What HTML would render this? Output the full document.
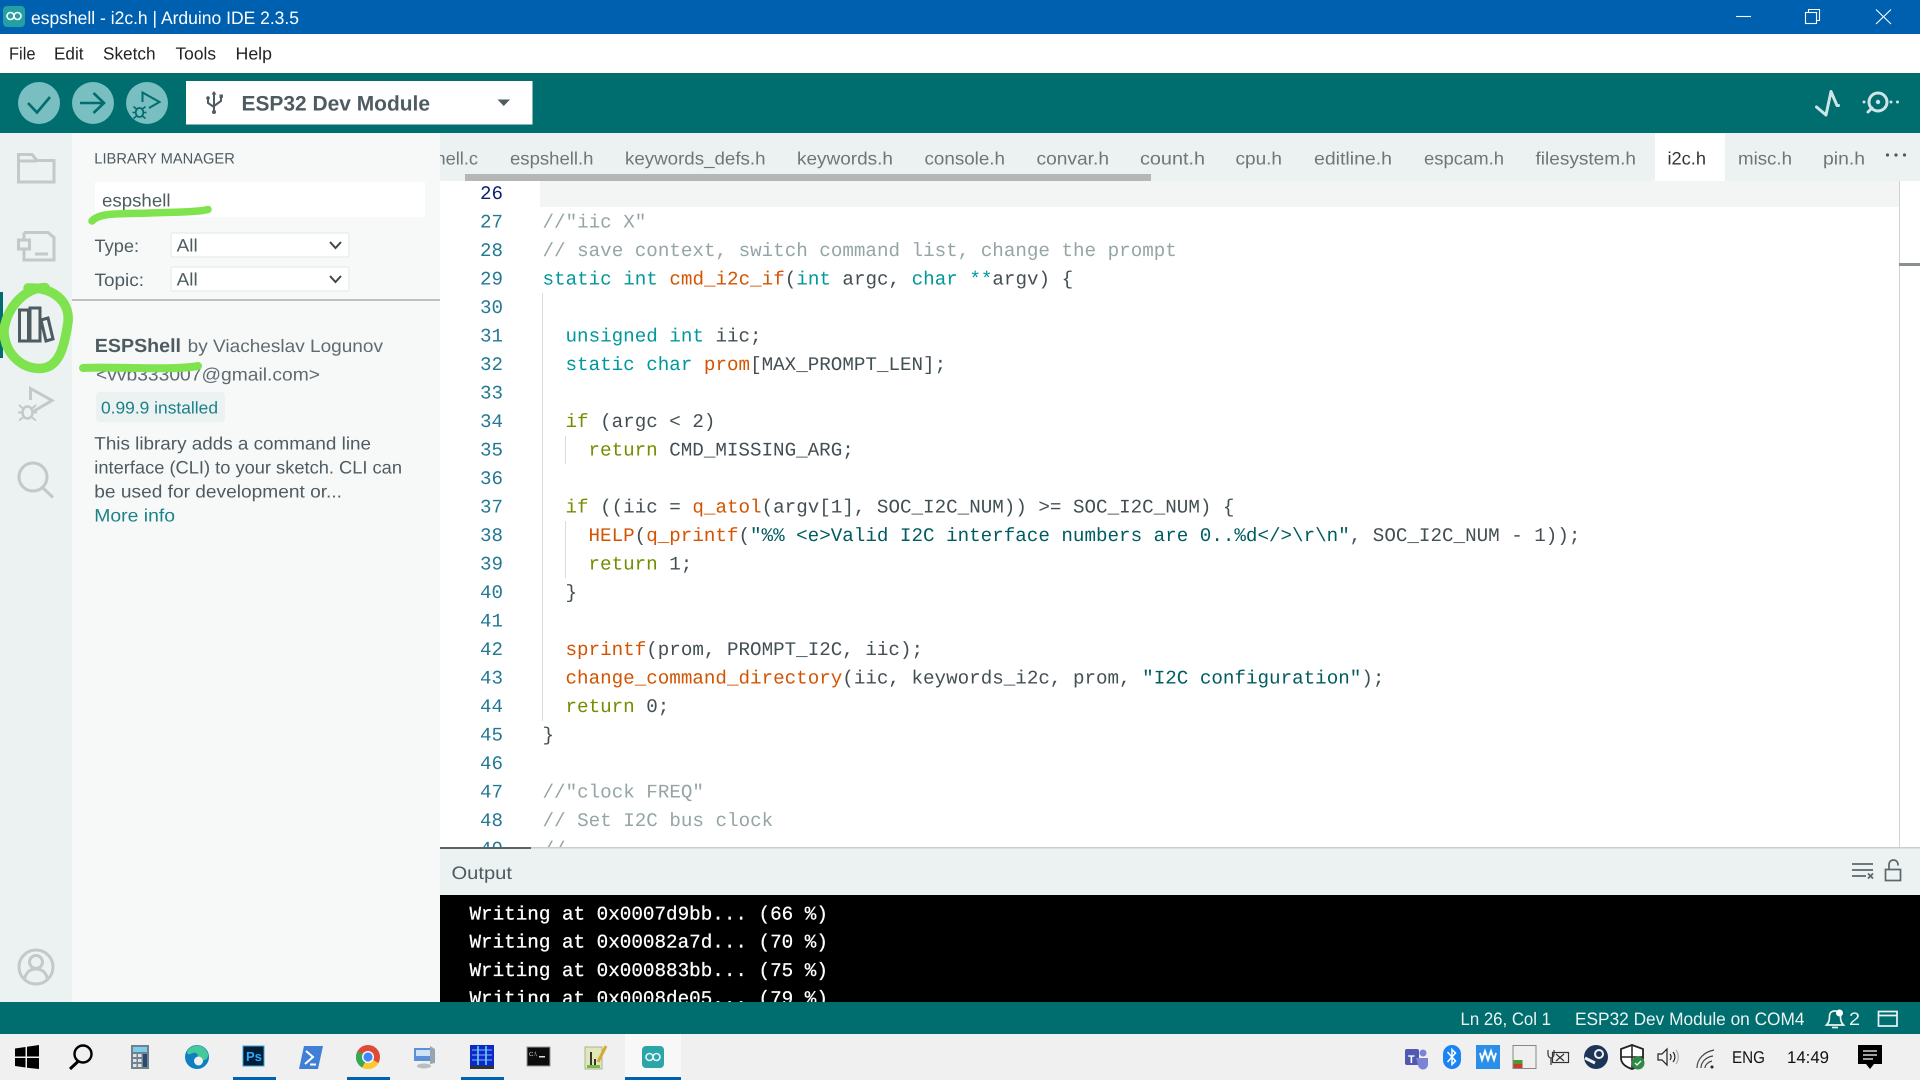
<!DOCTYPE html>
<html lang="en">
<head>
<meta charset="utf-8">
<title>espshell - i2c.h | Arduino IDE 2.3.5</title>
<style>
html,body{margin:0;padding:0;width:1920px;height:1080px;overflow:hidden;background:#fff}
svg{display:block;position:absolute;left:0;top:0}
text{font-family:"Liberation Sans",sans-serif;white-space:pre;text-rendering:geometricPrecision}
.code text{font-family:"Liberation Mono",monospace;font-size:19.23px;fill:#434f54}
text.mono{font-family:"Liberation Mono",monospace;font-size:19.27px;fill:#fff;stroke:#fff;stroke-width:.25px}
.n text{font-family:"Liberation Mono",monospace;font-size:19.17px;fill:#237893;text-anchor:end}
.k{fill:#00979d}.f{fill:#d35400}.c{fill:#728e00}.s{fill:#005c5f}
.m text{fill:#95a5a6}
.tab text{font-size:18px;fill:#6f7679}
.ui{fill:#4e5b61;font-size:18px}
.i{fill:none;stroke:#c3c8c9;stroke-width:3}
.g{fill:none;stroke:#7fe34f;stroke-linecap:round;stroke-linejoin:round}
</style>
</head>
<body>
<svg width="1920" height="1080" viewBox="0 0 1920 1080" xmlns="http://www.w3.org/2000/svg">
<!-- tabs strip -->
<rect x="440" y="133" width="1480" height="48" fill="#ecf1f1"/>
<rect x="1655" y="133" width="70" height="48" fill="#fff"/>
<g class="tab" transform="translate(0,-.5)">
<text x="397" y="165" textLength="81" lengthAdjust="spacingAndGlyphs">espshell.c</text>
<text x="510" y="165" textLength="83.5" lengthAdjust="spacingAndGlyphs">espshell.h</text>
<text x="625" y="165" textLength="140.5" lengthAdjust="spacingAndGlyphs">keywords_defs.h</text>
<text x="797" y="165" textLength="96" lengthAdjust="spacingAndGlyphs">keywords.h</text>
<text x="924.5" y="165" textLength="80.5" lengthAdjust="spacingAndGlyphs">console.h</text>
<text x="1036.5" y="165" textLength="72.5" lengthAdjust="spacingAndGlyphs">convar.h</text>
<text x="1140" y="165" textLength="65" lengthAdjust="spacingAndGlyphs">count.h</text>
<text x="1235.5" y="165" textLength="46.5" lengthAdjust="spacingAndGlyphs">cpu.h</text>
<text x="1314" y="165" textLength="78" lengthAdjust="spacingAndGlyphs">editline.h</text>
<text x="1424" y="165" textLength="80" lengthAdjust="spacingAndGlyphs">espcam.h</text>
<text x="1535.5" y="165" textLength="100.5" lengthAdjust="spacingAndGlyphs">filesystem.h</text>
<text x="1667.5" y="165" textLength="38.5" lengthAdjust="spacingAndGlyphs" style="fill:#333">i2c.h</text>
<text x="1738" y="165" textLength="54" lengthAdjust="spacingAndGlyphs">misc.h</text>
<text x="1823" y="165" textLength="42" lengthAdjust="spacingAndGlyphs">pin.h</text>
</g>
<g fill="#555"><circle cx="1887.5" cy="155" r="1.6"/><circle cx="1896" cy="155" r="1.6"/><circle cx="1904.5" cy="155" r="1.6"/></g>
<rect x="465" y="174" width="686" height="7" fill="#b5b7b7"/>

<!-- editor -->
<rect x="440" y="181" width="1480" height="666" fill="#fff"/>
<rect x="540" y="181" width="1359" height="26" fill="#f3f5f5"/>
<rect x="1899" y="181" width="1" height="666" fill="#d0d3d4"/>
<rect x="1899" y="263" width="21" height="3" fill="#8a8f91"/>
<rect x="542" y="293" width="1" height="428" fill="#d9dcdd"/>
<rect x="565" y="436" width="1" height="28" fill="#d9dcdd"/>
<rect x="565" y="521" width="1" height="57" fill="#d9dcdd"/>
<g class="n" transform="translate(0,-.3)">
<text x="503" y="199.5" style="fill:#0b216f">26</text>
<text x="503" y="228">27</text>
<text x="503" y="256.5">28</text>
<text x="503" y="285">29</text>
<text x="503" y="313.5">30</text>
<text x="503" y="342">31</text>
<text x="503" y="370.5">32</text>
<text x="503" y="399">33</text>
<text x="503" y="427.5">34</text>
<text x="503" y="456">35</text>
<text x="503" y="484.5">36</text>
<text x="503" y="513">37</text>
<text x="503" y="541.5">38</text>
<text x="503" y="570">39</text>
<text x="503" y="598.5">40</text>
<text x="503" y="627">41</text>
<text x="503" y="655.5">42</text>
<text x="503" y="684">43</text>
<text x="503" y="712.5">44</text>
<text x="503" y="741">45</text>
<text x="503" y="769.5">46</text>
<text x="503" y="798">47</text>
<text x="503" y="826.5">48</text>
<text x="503" y="855">49</text>
</g>
<g class="code" transform="translate(0,-.3)">
<g class="m">
<text x="542.5" y="228">//"iic X"</text>
<text x="542.5" y="256.5">// save context, switch command list, change the prompt</text>
<text x="542.5" y="798">//"clock FREQ"</text>
<text x="542.5" y="826.5">// Set I2C bus clock</text>
<text x="542.5" y="855">//</text>
</g>
<text x="542.5" y="285"><tspan class="k">static int</tspan> <tspan class="f">cmd_i2c_if</tspan>(<tspan class="k">int</tspan> argc, <tspan class="k">char</tspan> <tspan class="k">**</tspan>argv) {</text>
<text x="565.5" y="342"><tspan class="k">unsigned int</tspan> iic;</text>
<text x="565.5" y="370.5"><tspan class="k">static char</tspan> <tspan class="f">prom</tspan>[MAX_PROMPT_LEN];</text>
<text x="565.5" y="427.5"><tspan class="c">if</tspan> (argc &lt; 2)</text>
<text x="588.5" y="456"><tspan class="c">return</tspan> CMD_MISSING_ARG;</text>
<text x="565.5" y="513"><tspan class="c">if</tspan> ((iic = <tspan class="f">q_atol</tspan>(argv[1], SOC_I2C_NUM)) &gt;= SOC_I2C_NUM) {</text>
<text x="588.5" y="541.5"><tspan class="f">HELP</tspan>(<tspan class="f">q_printf</tspan>(<tspan class="s">"%% &lt;e&gt;Valid I2C interface numbers are 0..%d&lt;/&gt;\r\n"</tspan>, SOC_I2C_NUM - 1));</text>
<text x="588.5" y="570"><tspan class="c">return</tspan> 1;</text>
<text x="565.5" y="598.5">}</text>
<text x="565.5" y="655.5"><tspan class="f">sprintf</tspan>(prom, PROMPT_I2C, iic);</text>
<text x="565.5" y="684"><tspan class="f">change_command_directory</tspan>(iic, keywords_i2c, prom, <tspan class="s">"I2C configuration"</tspan>);</text>
<text x="565.5" y="712.5"><tspan class="c">return</tspan> 0;</text>
<text x="542.5" y="741">}</text>
</g>

<!-- output -->
<rect x="440" y="847" width="1480" height="48" fill="#ecf1f1"/>
<rect x="440" y="847" width="1480" height="1.5" fill="#c9cdce"/>
<rect x="440" y="847" width="91" height="2" fill="#5a6468"/>
<text class="ui" x="451.5" y="879" textLength="60.5" lengthAdjust="spacingAndGlyphs">Output</text>
<g fill="none" stroke="#5b666b" stroke-width="1.7">
<path d="M1852 864H1873M1852 870H1873M1852 876H1866M1868 873.5l5 5M1873 873.5l-5 5"/>
<rect x="1885.5" y="869.5" width="15" height="11"/>
<path d="M1889 869v-4.5a4.5 4.5 0 0 1 9 0v1"/>
</g>
<rect x="440" y="895" width="1480" height="107" fill="#000"/>
<g>
<text class="mono" x="469.5" y="919.5">Writing at 0x0007d9bb... (66 %)</text>
<text class="mono" x="469.5" y="947.5">Writing at 0x00082a7d... (70 %)</text>
<text class="mono" x="469.5" y="976">Writing at 0x000883bb... (75 %)</text>
<text class="mono" x="469.5" y="1004">Writing at 0x0008de05... (79 %)</text>
</g>

<!-- left activity bar and library panel -->
<rect x="0" y="133" width="72" height="869" fill="#ecf1f1"/>
<rect x="72" y="133" width="368" height="869" fill="#f7f9f9"/>
<!-- activity icons -->
<path class="i" d="M18.5 182V154.5H32l5 6H54V182Z M18.5 161H37"/>
<g class="i"><path d="M24 232.5H48l6 5V260H24V249 M24 241v-8.5"/><rect x="18.5" y="240" width="11" height="9"/><path d="M35 254H48"/></g>
<g class="i"><path d="M30.500 400V388.500L52 400.500L34 411"/><ellipse cx="27.500" cy="412.500" rx="5" ry="6" stroke-width="2.500"/><path d="M19 405l4 3.500M36 405l-4 3.500M18 412.500h4M33 412.500h4M19 420.500l4-3M36 420.500l-4-3" stroke-width="2"/></g>
<g class="i" stroke-width="3.2"><circle cx="33" cy="477" r="14"/><path d="M43 488L53 497.5"/></g>
<g class="i"><circle cx="36" cy="967" r="17"/><circle cx="36" cy="962" r="6.5"/><path d="M24.5 980c1-8 6-11 11.5-11s10.5 3 11.5 11"/></g>
<rect x="0" y="292" width="3" height="66" fill="#006d70"/>
<g fill="none" stroke="#4e5b61" stroke-width="3"><rect x="19.5" y="310" width="9" height="31"/><rect x="30" y="308" width="10" height="33"/><path d="M41 320l7-2 5 21-7 2Z"/></g>

<text class="ui" x="94.300" y="163.500" style="font-size:15px" textLength="140.500" lengthAdjust="spacingAndGlyphs">LIBRARY MANAGER</text>
<rect x="95" y="182" width="330" height="35" fill="#fff"/>
<text class="ui" x="102" y="206.300" textLength="68.500" lengthAdjust="spacingAndGlyphs">espshell</text>
<text class="ui" x="94.500" y="252.200" textLength="44.500" lengthAdjust="spacingAndGlyphs">Type:</text>
<text class="ui" x="94.500" y="286.200" textLength="49.500" lengthAdjust="spacingAndGlyphs">Topic:</text>
<rect x="171" y="233" width="178" height="24" rx="2" fill="#fff" stroke="#e3e6e6"/>
<rect x="171" y="267" width="178" height="24" rx="2" fill="#fff" stroke="#e3e6e6"/>
<text class="ui" x="176.700" y="251.300" textLength="21" lengthAdjust="spacingAndGlyphs">All</text>
<text class="ui" x="176.700" y="285.300" textLength="21" lengthAdjust="spacingAndGlyphs">All</text>
<path d="M330 242l5.500 6 5.500-6M330 276l5.500 6 5.500-6" fill="none" stroke="#3d474b" stroke-width="2"/>
<rect x="72" y="299" width="368" height="2" fill="#bcc0c1"/>
<text class="ui" x="94.800" y="352.200" style="font-weight:bold;font-size:19px" textLength="86.200" lengthAdjust="spacingAndGlyphs">ESPShell</text>
<text class="ui" x="187.700" y="352.200" textLength="195.300" lengthAdjust="spacingAndGlyphs" style="fill:#5f6b70">by Viacheslav Logunov</text>
<text class="ui" x="96" y="380.500" textLength="224" lengthAdjust="spacingAndGlyphs" style="fill:#5f6b70">&lt;vvb333007@gmail.com&gt;</text>
<rect x="96" y="392" width="129" height="30" rx="4" fill="#ecf1f1"/>
<text x="101" y="413.400" style="font-size:17px;fill:#1a8288" textLength="117" lengthAdjust="spacingAndGlyphs">0.99.9 installed</text>
<text class="ui" x="94.300" y="449.400" textLength="276.700" lengthAdjust="spacingAndGlyphs">This library adds a command line</text>
<text class="ui" x="94.300" y="473.400" textLength="307.700" lengthAdjust="spacingAndGlyphs">interface (CLI) to your sketch. CLI can</text>
<text class="ui" x="94.300" y="497.400" textLength="247.700" lengthAdjust="spacingAndGlyphs">be used for development or...</text>
<text x="94.300" y="521.400" style="font-size:18px;fill:#1a8288" textLength="80.700" lengthAdjust="spacingAndGlyphs">More info</text>

<!-- green marker annotations -->
<path class="g" stroke-width="7.500" d="M92 221C100 212 122 214 150 213S198 212 208 209.500"/>
<path class="g" stroke-width="8" d="M83 368C110 366 170 371 198 366"/>
<path class="g" stroke-width="9.500" d="M45 287.500C24 288 7 308 4 330C4 352 20 368.500 40 368.500C58 368 64 350 68 322C70 302 54 287 28 288"/>

<!-- title bar -->
<rect x="0" y="0" width="1920" height="34" fill="#0060b0"/>
<rect x="3" y="6" width="22" height="21" rx="4" fill="#23a0a4"/>
<g fill="none" stroke="#fff" stroke-width="1.600"><circle cx="10.500" cy="16" r="3.500"/><circle cx="17.500" cy="16" r="3.500"/></g>
<text x="31" y="24" style="font-size:18px;fill:#fff" textLength="268" lengthAdjust="spacingAndGlyphs">espshell - i2c.h | Arduino IDE 2.3.5</text>
<g fill="none" stroke="#fff" stroke-width="1.100">
<path d="M1736 16.500H1751"/>
<rect x="1805.500" y="12.500" width="11" height="11"/>
<path d="M1808.500 12.500V9.500H1819.500V20.500H1816.500"/>
<path d="M1876 9.500L1891 24M1891 9.500L1876 24"/>
</g>

<!-- menu bar -->
<rect x="0" y="34" width="1920" height="39" fill="#fff"/>
<g>
<text x="9" y="59.500" style="font-size:17.500px;fill:#222" textLength="26.500" lengthAdjust="spacingAndGlyphs">File</text>
<text x="54" y="59.500" style="font-size:17.500px;fill:#222" textLength="29.500" lengthAdjust="spacingAndGlyphs">Edit</text>
<text x="103" y="59.500" style="font-size:17.500px;fill:#222" textLength="52.500" lengthAdjust="spacingAndGlyphs">Sketch</text>
<text x="175.500" y="59.500" style="font-size:17.500px;fill:#222" textLength="40.500" lengthAdjust="spacingAndGlyphs">Tools</text>
<text x="235.500" y="59.500" style="font-size:17.500px;fill:#222" textLength="36.500" lengthAdjust="spacingAndGlyphs">Help</text>
</g>

<!-- toolbar -->
<rect x="0" y="73" width="1920" height="60" fill="#006d6f"/>
<g fill="#79bec1"><ellipse cx="39" cy="103" rx="21" ry="21"/><ellipse cx="93" cy="103" rx="21" ry="21"/><ellipse cx="147" cy="103" rx="21" ry="21"/></g>
<g fill="none" stroke="#006d6f" stroke-width="2.600">
<path d="M28 103L37 112.500L50 97"/>
<path d="M80 103H103M93.500 93L104 103L93.500 113"/>
<path d="M142.500 102V92.500L159.500 102L149 108" stroke-width="2"/>
<ellipse cx="139.500" cy="112.500" rx="3.800" ry="4.500" stroke-width="1.800"/>
<path d="M133.500 106.500l3 2.500M145.500 106.500l-3 2.500M132.500 112.500h3.500M143 112.500h3.500M133.500 118.500l3-2.500M145.500 118.500l-3-2.500" stroke-width="1.600"/>
</g>
<rect x="186" y="81" width="346.500" height="43.500" fill="#fff"/>
<g fill="none" stroke="#4e5b61" stroke-width="2"><path d="M214 93V112M208 99v4l6 4M221 97v4l-7 5"/></g>
<path d="M214 91l-2.500 3.500h5Z" fill="#4e5b61"/><circle cx="214" cy="112" r="2" fill="#4e5b61"/><circle cx="208" cy="98" r="1.800" fill="#4e5b61"/><rect x="219.500" y="94.500" width="3.400" height="3.400" fill="#4e5b61"/>
<text x="241.500" y="110.500" style="font-size:21px;font-weight:bold;fill:#4e5b61" textLength="188.500" lengthAdjust="spacingAndGlyphs">ESP32 Dev Module</text>
<path d="M497.500 99.500H510L503.750 106Z" fill="#4e5b61"/>
<g fill="none" stroke="#cde5e6" stroke-width="3" stroke-linecap="round" stroke-linejoin="round">
<path d="M1816.500 107L1826 115L1831 91.500L1837 105.500H1838.500"/>
<circle cx="1878" cy="102" r="9"/>
<path d="M1868 112L1872 108"/>
</g>
<g fill="#cde5e6"><circle cx="1878" cy="102" r="2.200"/><circle cx="1864" cy="102" r="1.500"/><circle cx="1891" cy="102" r="1.500"/><circle cx="1897.500" cy="102" r="1.500"/></g>

<!-- status bar -->
<rect x="0" y="1002" width="1920" height="32" fill="#006d6f"/>
<g>
<text x="1460.500" y="1025" style="font-size:18px;fill:#eaf4f4" textLength="90.500" lengthAdjust="spacingAndGlyphs">Ln 26, Col 1</text>
<text x="1575" y="1025" style="font-size:18px;fill:#eaf4f4" textLength="229.500" lengthAdjust="spacingAndGlyphs">ESP32 Dev Module on COM4</text>
<text x="1849" y="1025" style="font-size:18px;fill:#eaf4f4" textLength="11" lengthAdjust="spacingAndGlyphs">2</text>
</g>
<g fill="none" stroke="#eaf4f4" stroke-width="1.700">
<path d="M1826.500 1025c3-3 3-6 3-9c0-3 2-5 5.500-5s5.500 2 5.500 5c0 3 0 6 3 9Z"/>
<path d="M1832 1027.500h6"/>
<rect x="1878.500" y="1011.500" width="18.500" height="14.500"/><path d="M1878.500 1015.500h18.500"/>
</g>
<circle cx="1839.500" cy="1013" r="3.500" fill="#fff"/>

<!-- taskbar -->
<rect x="0" y="1034" width="1920" height="46" fill="#f0f0f0"/>
<rect x="625" y="1034" width="56" height="46" fill="#f8f8f8"/>
<g fill="#0063b1"><rect x="233" y="1077" width="43" height="3"/><rect x="347" y="1077" width="43" height="3"/><rect x="461" y="1077" width="43" height="3"/><rect x="625" y="1077" width="56" height="3"/></g>
<path d="M15 1048.500L25.500 1047V1056.500H15ZM27 1046.700L39 1045V1056.500H27ZM15 1058H25.500V1067.500L15 1066ZM27 1058H39V1069L27 1067.700Z" fill="#000"/>
<g fill="none" stroke="#000" stroke-width="2.400"><circle cx="83" cy="1054" r="8.500"/><path d="M78 1061.500L70 1069" stroke-width="3"/></g>
<rect x="131" y="1045" width="18" height="24" fill="#71818e"/><rect x="133" y="1047" width="14" height="5" fill="#7fcdee"/>
<g fill="#dfe6ea"><rect x="133" y="1054" width="3.500" height="3"/><rect x="138" y="1054" width="3.500" height="3"/><rect x="133" y="1059" width="3.500" height="3"/><rect x="138" y="1059" width="3.500" height="3"/><rect x="133" y="1064" width="3.500" height="3"/><rect x="138" y="1064" width="3.500" height="3"/></g><rect x="143" y="1054" width="4" height="13" fill="#2b4a70"/>
<circle cx="197" cy="1057" r="12" fill="#0f7fc4"/><path d="M187 1052C190 1044 204 1042 208 1054C209 1060 202 1062 197 1060C200 1055 196 1052 193 1053C189 1054 188 1056 187 1052Z" fill="#45c99a"/><circle cx="198.500" cy="1061" r="4.500" fill="#f0f0f0"/>
<rect x="243" y="1046" width="21" height="20" fill="#001e36" stroke="#2fa3d6" stroke-width="1"/>
<text x="246" y="1061" style="font-size:13px;fill:#31a8ff;font-weight:bold">Ps</text>
<path d="M304 1046H323L318 1069H299Z" fill="#3f80d6"/><path d="M306 1051L313 1057L305 1064M310 1064.500H316" fill="none" stroke="#fff" stroke-width="2"/>
<circle cx="368" cy="1057" r="12" fill="#e04b37"/><path d="M368 1057L378.500 1063A12 12 0 0 1 362 1067.500Z" fill="#fcc934"/><path d="M368 1057L362 1067.500A12 12 0 0 1 357.600 1051Z" fill="#34a853"/><circle cx="368" cy="1057" r="6" fill="#fff"/><circle cx="368" cy="1057" r="4.600" fill="#4285f4"/>
<rect x="414" y="1048" width="19" height="13" fill="#5b8fd6"/><rect x="416" y="1050" width="15" height="6" fill="#cfe2f6"/><path d="M430 1046l5 3v14l-5 1Z" fill="#9aa4ad"/><ellipse cx="424" cy="1066" rx="7" ry="2.500" fill="#b8bec4"/>
<rect x="470" y="1045" width="24" height="21" fill="#0a2bc4"/><path d="M478 1046v19M486 1046v19" stroke="#70e0ff" stroke-width="1.500"/><path d="M472 1050h20M472 1055h20M472 1060h20" stroke="#8fb0ff" stroke-width="1"/><rect x="470" y="1066" width="24" height="3" fill="#333"/>
<rect x="527" y="1047" width="23" height="19" fill="#0c0c0c" stroke="#999"/><text x="529" y="1056" style="font-size:6px;fill:#ddd">C:\</text><rect x="539" y="1056" width="6" height="1.500" fill="#ddd"/>
<rect x="585" y="1047" width="17" height="22" fill="#dfe8b8" stroke="#a9b39a"/><path d="M591 1052v13M595 1059v6" stroke="#222" stroke-width="1.800"/><path d="M598 1062L606 1046" stroke="#d8a92f" stroke-width="3"/><rect x="587" y="1065" width="13" height="3" fill="#7db54a"/>
<rect x="642" y="1046" width="22" height="22" rx="4" fill="#2ba5a8"/>
<g fill="none" stroke="#e6f6f6" stroke-width="1.600"><circle cx="649.500" cy="1057" r="3.500"/><circle cx="656.500" cy="1057" r="3.500"/></g>

<!-- tray -->
<rect x="1405" y="1049" width="14" height="16" rx="2" fill="#5058b0"/><circle cx="1423" cy="1053" r="3.500" fill="#7b83d4"/><path d="M1416 1058h12v6a5 5 0 0 1-10 1Z" fill="#7b83d4"/><text x="1408" y="1063" style="font-size:11px;font-weight:bold;fill:#fff">T</text>
<rect x="1443" y="1045" width="18" height="24" rx="9" fill="#1b84f2"/><path d="M1447.500 1052l8 9-3.500 3.500v-15l3.500 3.500-8 9" fill="none" stroke="#fff" stroke-width="1.500"/>
<rect x="1476" y="1045" width="24" height="24" fill="#2b8fea"/><path d="M1480 1053l2 7 3-9 3 9 3-9 3 9 2-7" fill="none" stroke="#fff" stroke-width="1.800"/>
<rect x="1513" y="1045.500" width="23" height="23" fill="#efefef" stroke="#888"/><rect x="1513.500" y="1060" width="9" height="4" fill="#4d9a2f"/><rect x="1513.500" y="1064" width="9" height="4" fill="#c93b2e"/>
<g fill="none" stroke="#333" stroke-width="1.200"><rect x="1552.500" y="1052.500" width="16" height="10"/><path d="M1548 1050v4c0 3 2 4 3 4s3-1 3-4v-4M1551 1058v7M1556 1054l8 7M1564 1054l-8 7"/></g>
<circle cx="1596" cy="1057" r="12" fill="#1b3458"/><circle cx="1599" cy="1054" r="5" fill="#f0f0f0"/><circle cx="1599" cy="1054" r="3" fill="#1b3458"/><path d="M1585 1058L1595 1063" stroke="#f0f0f0" stroke-width="3"/>
<path d="M1632 1045l11 4v9c0 6-5 9-11 11c-6-2-11-5-11-11v-9Z" fill="#fff" stroke="#222" stroke-width="1.800"/><path d="M1632 1045v24M1621 1057h22" stroke="#222" stroke-width="1.500"/><circle cx="1638" cy="1063" r="6.500" fill="#2e8b45"/><path d="M1635 1063l2 2 4-4" stroke="#fff" fill="none" stroke-width="1.300"/>
<g fill="none" stroke="#222" stroke-width="1.200"><path d="M1658 1054h4l5-5v16l-5-5h-4Z M1670 1054c1.500 2 1.500 4 0 6M1673 1052c2.500 3 2.500 7 0 10"/><path d="M1676 1050c3 4 3 10 0 14" stroke="#aaa"/></g>
<g fill="none" stroke="#444" stroke-width="1.200"><path d="M1697 1068c0-9 7-16 17-18M1701 1068c0-6 5-11 12-12M1705 1068c0-3 3-6 7-7"/></g><circle cx="1712" cy="1067" r="1.500" fill="#222"/>
<text x="1732" y="1063" style="font-size:17px;fill:#111" textLength="33" lengthAdjust="spacingAndGlyphs">ENG</text>
<text x="1787" y="1063" style="font-size:17px;fill:#111" textLength="42" lengthAdjust="spacingAndGlyphs">14:49</text>
<path d="M1858 1045H1882V1064H1874L1870 1069L1866 1064H1858Z" fill="#000"/>
<path d="M1863 1051H1877M1863 1055H1877M1863 1059H1873" stroke="#fff" stroke-width="1.300"/>
</svg>
</body>
</html>
